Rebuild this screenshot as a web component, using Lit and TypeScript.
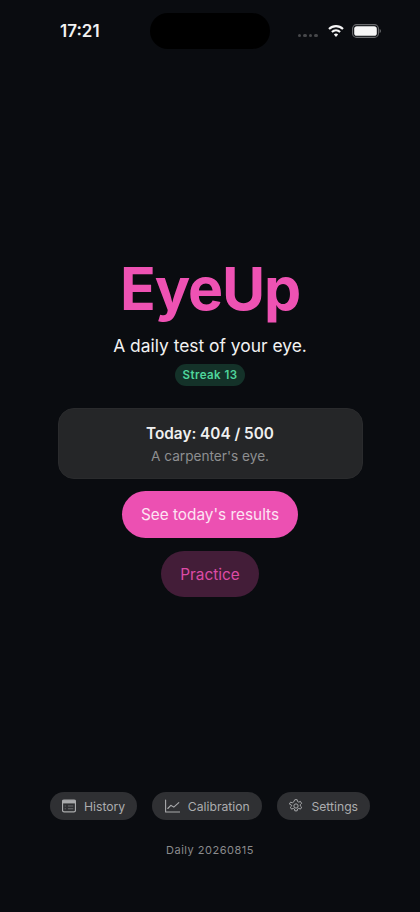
import { LitElement, html, css, svg } from "lit";
import { customElement } from "lit/decorators.js";

@customElement("app-root")
export class AppRoot extends LitElement {
  static styles = css`
    :host {
      display: block;
      width: 420px;
      height: 912px;
      background: #0a0c10;
      font-family: Inter, "Noto Sans", sans-serif;
      color: #fff;
      overflow: hidden;
    }
    .page {
      height: 912px;
      display: flex;
      flex-direction: column;
      align-items: center;
    }
    .status {
      width: 100%;
      box-sizing: border-box;
      height: 62px;
      padding: 13px 39px 0 60px;
      display: flex;
      align-items: flex-start;
    }
    .time {
      width: 90px;
      height: 36px;
      line-height: 36px;
      font-size: 17px;
      font-weight: 600;
      color: #f2f2f2;
    }
    .island {
      width: 120px;
      height: 36px;
      border-radius: 18px;
      background: #000;
    }
    .indicators {
      margin-left: auto;
      height: 36px;
      display: flex;
      align-items: center;
      gap: 7px;
    }
    .dots { display: flex; gap: 2px; margin-top: 9px; margin-right: 2px; }
    .dots i { width: 3.6px; height: 3.6px; border-radius: 50%; background: #47484b; }
    .main {
      margin-top: 196px;
      display: flex;
      flex-direction: column;
      align-items: center;
    }
    h1 {
      margin: 0;
      font-size: 59px;
      line-height: 62px;
      font-weight: 650;
      letter-spacing: -1.2px;
      color: #ee52b3;
    }
    .sub {
      margin-top: 12px;
      font-size: 17.4px;
      line-height: 28px;
      color: #f2f2f2;
    }
    .badge {
      margin-top: 4px;
      height: 22px;
      width: 70px;
      border-radius: 11px;
      background: #143229;
      color: #4fd69c;
      font-size: 11.5px;
      font-weight: 600;
      letter-spacing: 0.45px;
      display: flex;
      align-items: center;
      justify-content: center;
    }
    .card {
      margin-top: 22px;
      width: 305px;
      height: 71px;
      box-sizing: border-box;
      padding-top: 1px;
      border-radius: 16px;
      background: #252628;
      border: 1px solid #2a2b2d;
      display: flex;
      flex-direction: column;
      align-items: center;
      justify-content: center;
    }
    .score { font-size: 15.3px; line-height: 24px; font-weight: 600; color: #f0f0f0; }
    .desc { font-size: 13.65px; line-height: 20px; color: #8e8f91; }
    .primary, .secondary {
      border: 0;
      padding: 0;
      font-family: inherit;
      font-size: 15.35px;
      display: flex;
      align-items: center;
      justify-content: center;
    }
    .primary {
      margin-top: 12px;
      width: 176px;
      height: 47px;
      border-radius: 24px;
      background: #ec50b2;
      color: #fde4f3;
    }
    .secondary {
      margin-top: 13px;
      width: 98px;
      height: 46px;
      border-radius: 23px;
      background: #431d38;
      color: #dd4ba6;
    }
    .nav {
      margin-top: auto;
      display: flex;
      gap: 15px;
    }
    .pill {
      height: 28px;
      border-radius: 14px;
      background: #2f3033;
      color: #acadaf;
      font-size: 12.2px;
      display: flex;
      align-items: center;
      gap: 8px;
      padding: 0 12.3px;
    }
    .pill svg { display: block; }
    .daily {
      margin-top: 22px;
      margin-bottom: 54px;
      font-size: 11px;
      line-height: 16px;
      letter-spacing: 0.5px;
      color: #8a8b8d;
    }
  `;

  private wifi() {
    return html`<svg width="18" height="14" viewBox="0 0 18 14">
      <path d="M2 5a10 10 0 0 1 14 0" fill="none" stroke="#f6f6f6" stroke-width="2.1"/>
      <path d="M4.9 8a6 6 0 0 1 8.2 0" fill="none" stroke="#f6f6f6" stroke-width="2.1"/>
      <path d="M9 9.6c-.9 0-1.6.3-2.1.9L9 13l2.1-2.5c-.5-.6-1.2-.9-2.1-.9z" fill="#f6f6f6"/>
    </svg>`;
  }

  private battery() {
    return html`<svg width="29" height="14" viewBox="0 0 29 14">
      <rect x="0.6" y="0.6" width="25.8" height="12.8" rx="4" fill="none" stroke="#6a6b6e" stroke-width="1.1"/>
      <rect x="2.2" y="2.2" width="22.6" height="9.6" rx="2.6" fill="#f6f6f6"/>
      <path d="M27.6 5v4c.8-.3 1.3-1.1 1.3-2s-.5-1.7-1.3-2z" fill="#6a6b6e"/>
    </svg>`;
  }

  private icon(name: string) {
    const c = "#a9aaac";
    if (name === "history") {
      return html`<svg width="14" height="14" viewBox="1.5 1.5 13 13">
        <rect x="2" y="2.6" width="12" height="10.8" rx="1.4" fill="none" stroke=${c} stroke-width="1.1"/>
        <rect x="2" y="2.6" width="12" height="3" fill=${c}/>
        <path d="M7 8h5M7 10.5h5M4 8h1M4 10.5h1" fill="none" stroke="#6c6d70" stroke-width="1"/>
      </svg>`;
    }
    if (name === "calibration") {
      return html`<svg width="15" height="14" viewBox="1 1 15 14">
        <path d="M1.6 2v12h14" fill="none" stroke=${c} stroke-width="1.1" stroke-linecap="round" stroke-linejoin="round"/>
        <path d="M3.8 10.5l3-3.2 3 1.8 5-4.4" fill="none" stroke=${c} stroke-width="1.1" stroke-linecap="round" stroke-linejoin="round"/>
      </svg>`;
    }
    return html`<svg width="14" height="14" viewBox="0.8 0.8 14.4 14.4">
      ${svg`<path d="M6.8 1.5h2.4l.4 1.9 1.2.6 1.8-.7 1.2 2-1.4 1.3v1.3l1.4 1.3-1.2 2-1.8-.7-1.2.6-.4 1.9H6.8l-.4-1.9-1.2-.6-1.8.7-1.2-2 1.4-1.3V7.3L1.2 6l1.2-2 1.8.7 1.2-.6z" fill="none" stroke=${c} stroke-width="1" stroke-linejoin="round"/>
      <circle cx="8" cy="8" r="2.2" fill="none" stroke=${c} stroke-width="1"/>`}
    </svg>`;
  }

  render() {
    return html`<div class="page">
      <div class="status">
        <div class="time">17:21</div>
        <div class="island"></div>
        <div class="indicators">
          <div class="dots"><i></i><i></i><i></i><i></i></div>
          ${this.wifi()} ${this.battery()}
        </div>
      </div>
      <div class="main">
        <h1>EyeUp</h1>
        <div class="sub">A daily test of your eye.</div>
        <div class="badge">Streak 13</div>
        <div class="card">
          <div class="score">Today: 404 / 500</div>
          <div class="desc">A carpenter's eye.</div>
        </div>
        <button class="primary">See today's results</button>
        <button class="secondary">Practice</button>
      </div>
      <div class="nav">
        <div class="pill">${this.icon("history")}History</div>
        <div class="pill">${this.icon("calibration")}Calibration</div>
        <div class="pill">${this.icon("settings")}Settings</div>
      </div>
      <div class="daily">Daily 20260815</div>
    </div>`;
  }
}
